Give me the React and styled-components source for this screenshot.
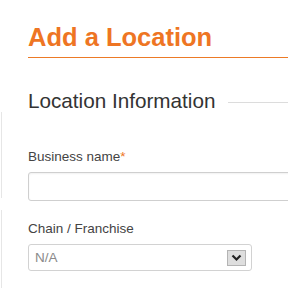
import React from 'react'
import styled, { createGlobalStyle } from 'styled-components'

const Global = createGlobalStyle`
  html, body {
    margin: 0;
    padding: 0;
    background: #fff;
    overflow: hidden;
  }
  body {
    font-family: "Liberation Sans", Arial, sans-serif;
  }
`

const App = () => {
  return (
    <>
      <Global />
      <Page>
        {/* faint edge of the neighbouring panel */}
        <Rail>
          <RailSegment $height={86} />
          <RailSegment />
        </Rail>
        <Main>
          <Title>Add a Location</Title>
          <Section>
            <Legend>
              <LegendText>Location Information</LegendText>
              <LegendLine />
            </Legend>
            <Field $gap={36}>
              <Label>Business name<Required>*</Required></Label>
              <TextInput type="text" />
            </Field>
            <Field $gap={20}>
              <Label>Chain / Franchise</Label>
              <Select>
                <SelectValue>N/A</SelectValue>
                <ArrowBox>
                  <svg width="11" height="8" viewBox="0 0 11 8">
                    <path d="M1.5 1.5 L5.5 5.5 L9.5 1.5" fill="none" stroke="#222" strokeWidth="2.2" />
                  </svg>
                </ArrowBox>
              </Select>
            </Field>
          </Section>
        </Main>
      </Page>
    </>
  )
}

export default App

// * Wrap
const Page = styled.div`
  display: flex;
  width: 288px;
  height: 288px;
  overflow: hidden;
`

const Rail = styled.div`
  width: 2px;
  padding-top: 112px;
  display: flex;
  flex-direction: column;
  gap: 12px;
  flex-shrink: 0;
`

const RailSegment = styled.div`
  border-right: 1px solid #e6e6e6;
  ${(p) => (p.$height ? `height: ${p.$height}px;` : 'flex: 1;')}
`

const Main = styled.main`
  flex: 1;
  padding-left: 26px;
  min-width: 0;
`

// * Title
const Title = styled.h1`
  margin: 0;
  padding-top: 23px;
  padding-bottom: 5px;
  font-size: 25.5px;
  line-height: 29px;
  font-weight: bold;
  color: #ee7523;
  border-bottom: 1px solid #ec7a26;
  white-space: nowrap;
`

// * Section
const Section = styled.section`
  padding-top: 31px;
`

const Legend = styled.div`
  display: flex;
  align-items: center;
  gap: 13px;
  height: 24px;
`

const LegendText = styled.span`
  font-size: 20.7px;
  color: #333;
  white-space: nowrap;
`

const LegendLine = styled.div`
  flex: 1;
  height: 1px;
  margin-top: 2px;
  background: #dcdcdc;
`

const Field = styled.div`
  margin-top: ${(p) => p.$gap}px;
`

const Label = styled.div`
  font-size: 13.5px;
  line-height: 15px;
  color: #444;
  margin-bottom: 8px;
  white-space: nowrap;
`

const Required = styled.span`
  color: #ee7523;
`

const TextInput = styled.input`
  display: block;
  box-sizing: border-box;
  width: 300px;
  height: 29px;
  margin: 0;
  border: 1px solid #cfcfcf;
  border-radius: 3px;
  box-shadow: inset 0 1px 2px rgba(0, 0, 0, 0.06);
  outline: none;
`

const Select = styled.div`
  box-sizing: border-box;
  width: 224px;
  height: 27px;
  border: 1px solid #d2d2d2;
  border-radius: 3px;
  display: flex;
  align-items: center;
  justify-content: space-between;
  padding: 0 5px 0 6px;
`

const SelectValue = styled.span`
  font-size: 13.5px;
  color: #8a8a8a;
`

const ArrowBox = styled.div`
  box-sizing: border-box;
  width: 19px;
  height: 16px;
  background: #dedede;
  border: 1px solid #b4b4b4;
  display: flex;
  align-items: center;
  justify-content: center;
`
